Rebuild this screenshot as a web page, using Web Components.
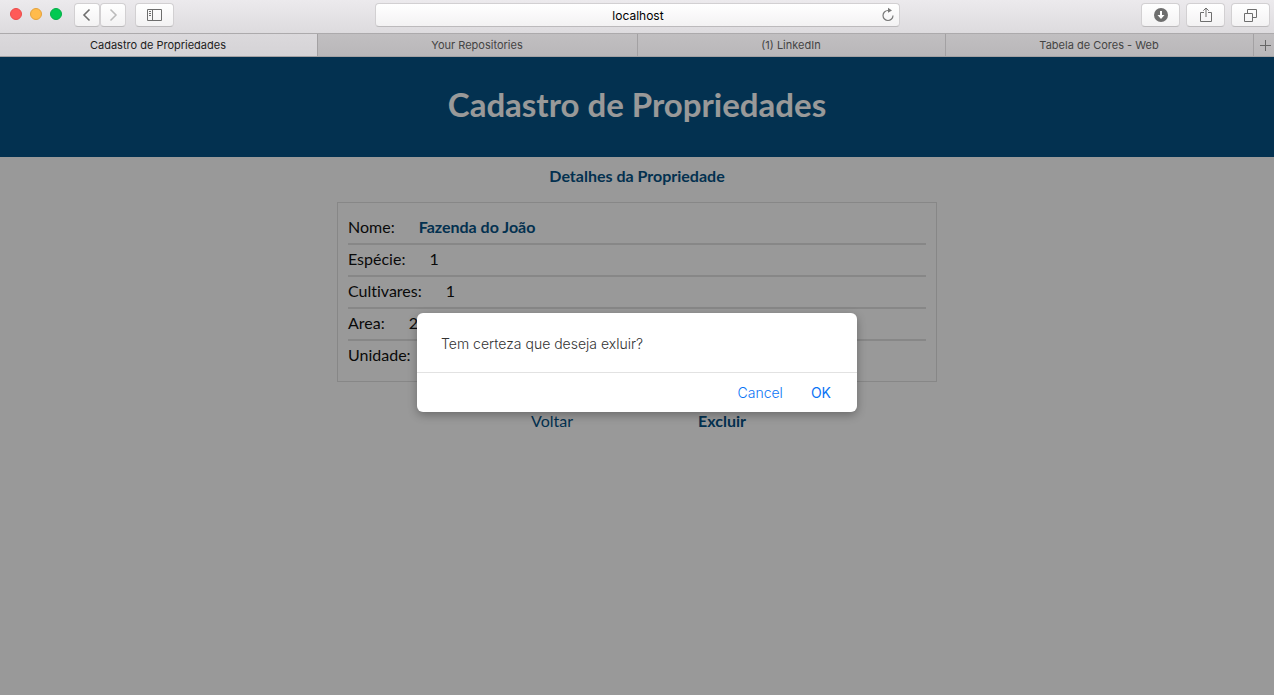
<!DOCTYPE html>
<html lang="pt-BR">
<head>
<meta charset="utf-8">
<meta name="viewport" content="width=device-width, initial-scale=1">
<title>Cadastro de Propriedades</title>
<style>
  body { margin: 0; font-family: Lato, "Open Sans", sans-serif; font-variant-ligatures: none; }
</style>
</head>
<body>
<browser-window></browser-window>

<script>
const define = (name, html) => {
  const template = document.createElement('template');
  template.innerHTML = html;
  customElements.define(name, class extends HTMLElement {
    constructor() {
      super();
      this.attachShadow({ mode: 'open' }).append(template.content.cloneNode(true));
    }
  });
};

define('tool-button', `
  <style>
    :host { display: block; flex: none; width: 39px; }
    :host([narrow]) { width: 26px; }
    button {
      display: flex; align-items: center; justify-content: center;
      box-sizing: border-box; width: 100%; height: 24px; padding: 0;
      border: 1px solid #d2d0d2; border-bottom-color: #bcbabc; border-radius: 4px;
      background: linear-gradient(#fff, #f3f2f3); color: #6e6e6e;
    }
  </style>
  <button type="button"><slot></slot></button>`);

define('browser-toolbar', `
  <style>
    :host {
      display: grid; grid-template-columns: 1fr minmax(200px, 525px) 1fr;
      box-sizing: border-box; height: 33px; padding: 3px 4px 0; column-gap: 8px;
      background: linear-gradient(#eceaed, #dddbde);
    }
    .left, .right { display: flex; }
    .lights { display: flex; gap: 8px; margin: 5px 12px 0 6px; }
    .lights i { box-sizing: border-box; width: 12px; height: 12px; border-radius: 50%; border-width: 1px; border-style: solid; }
    .red { background: #ff5a58; border-color: #ec4b49; }
    .yellow { background: #ffbb4b; border-color: #e5a23b; }
    .green { background: #00c951; border-color: #04ae47; }
    .nav { display: flex; margin-right: 9px; }
    .right { justify-content: flex-end; gap: 6px; }
    .address { position: relative; }
    input {
      display: block; box-sizing: border-box; width: 100%; height: 24px; padding: 0 20px 0 22px;
      border: 1px solid #d2d0d2; border-bottom-color: #bcbabc; border-radius: 4px;
      background: linear-gradient(#fff, #f3f2f3); text-align: center;
      font: 12px Inter, sans-serif; color: #000;
    }
    .reload {
      position: absolute; top: 4px; right: 4px; width: 16px; height: 16px;
      padding: 0; border: 0; background: none; color: #777;
    }
    svg { display: block; fill: none; stroke: currentColor; }
  </style>
  <div class="left">
    <div class="lights"><i class="red"></i><i class="yellow"></i><i class="green"></i></div>
    <div class="nav">
      <tool-button narrow><svg width="10" height="14" viewBox="0 0 10 14" stroke-width="1.6" aria-label="Back"><path d="M7.5 1.5 2 7l5.500 5.500"/></svg></tool-button>
      <tool-button narrow><svg width="10" height="14" viewBox="0 0 10 14" stroke-width="1.500" stroke-opacity=".45" aria-label="Forward"><path d="M2.500 1.500 8 7l-5.500 5.500"/></svg></tool-button>
    </div>
    <tool-button><svg width="15" height="12" viewBox="0 0 15 12" aria-label="Sidebar"><path d="M.5.5h14v11H.5zM5.500.5v11M2 2.500h2M2 4.500h2M2 6.500h2"/></svg></tool-button>
  </div>
  <div class="address">
    <input type="text" value="localhost" aria-label="Address">
    <button class="reload" type="button" aria-label="Reload"><svg width="16" height="16" viewBox="0 0 16 16" stroke-width="1.200"><path d="M8 3.500a5 5 0 1 0 5 5"/><path d="M8 .8v5l4-2.300z" fill="currentColor" stroke="none"/></svg></button>
  </div>
  <div class="right">
    <tool-button><svg width="14" height="14" viewBox="0 0 14 14" aria-label="Downloads"><circle cx="7" cy="7" r="7" fill="currentColor" stroke="none"/><path d="M7 3v5" stroke="#fff" stroke-width="2"/><path d="M3.500 7h7L7 11z" fill="#fff" stroke="none"/></svg></tool-button>
    <tool-button><svg width="12" height="16" viewBox="0 0 12 16" aria-label="Share"><path d="M4 5.500H.5v9h11v-9H8M6 10V1.200M3.300 3.700 6 1l2.700 2.700"/></svg></tool-button>
    <tool-button><svg width="13" height="13" viewBox="0 0 13 13" aria-label="Tabs"><path d="M.5 4.500h8v8h-8zM3.500 4.500v-4h9v8h-4"/></svg></tool-button>
  </div>`);

define('browser-tabs', `
  <style>
    :host {
      display: grid; grid-template-columns: 318fr 320fr 308fr 308fr 20px;
      box-sizing: border-box; height: 24px;
      border-top: 1px solid #acaaac; border-bottom: 1px solid #a3a1a3;
      background: linear-gradient(#c1bfc1, #b9b7b9);
    }
    button {
      min-width: 0; padding: 0 1px 0 0; border: 0; border-right: 1px solid #a3a1a3;
      background: none; font: 11px Inter, sans-serif; color: #444;
      white-space: nowrap; overflow: hidden;
    }
    .active { background: linear-gradient(#dbd9dc, #d5d3d6); color: #222; }
    .add { padding: 0 0 0 3px; border-right: 0; }
    svg { display: block; margin: auto; fill: none; stroke: #666; }
  </style>
  <button class="active" type="button">Cadastro de Propriedades</button>
  <button type="button">Your Repositories</button>
  <button type="button">(1) LinkedIn</button>
  <button type="button">Tabela de Cores - Web</button>
  <button class="add" type="button" aria-label="New tab"><svg width="11" height="11" viewBox="0 0 11 11"><path d="M5.500 0v11M0 5.500h11"/></svg></button>`);

define('detail-row', `
  <style>
    :host { display: flex; gap: 24px; padding-bottom: 2px; line-height: 28px; font-size: 16px; color: #111; border-bottom: 2px solid #e2e2e2; }
    :host(:last-child) { border-bottom: 0; }
  </style>
  <slot name="label"></slot><slot></slot>`);

define('property-page', `
  <style>
    :host { display: block; background: #fff; color: #055285; }
    header { display: flex; justify-content: center; background: #055285; color: #fff; }
    h1 { margin: 0; padding: 23px 0 29px; font-size: 33px; line-height: 48px; font-weight: 700; }
    h2 { margin: 9px 0 16px; text-align: center; font-size: 16px; line-height: 20px; font-weight: 700; }
    .card { box-sizing: border-box; max-width: 600px; margin: 0 auto; padding: 10px; border: 1px solid #e2e2e2; }
    b { color: #055285; }
    nav { display: flex; justify-content: center; margin-top: 29px; }
    nav a { width: 170px; text-align: center; font-size: 16px; line-height: 20px; color: #055285; text-decoration: none; }
    .danger { font-weight: 700; }
  </style>
  <header><h1>Cadastro de Propriedades</h1></header>
  <main>
    <h2>Detalhes da Propriedade</h2>
    <section class="card">
      <detail-row><span slot="label">Nome:</span><b>Fazenda do João</b></detail-row>
      <detail-row><span slot="label">Espécie:</span><span>1</span></detail-row>
      <detail-row><span slot="label">Cultivares:</span><span>1</span></detail-row>
      <detail-row><span slot="label">Area:</span><span>2</span></detail-row>
      <detail-row><span slot="label">Unidade:</span></detail-row>
    </section>
    <nav><a href="#voltar">Voltar</a><a class="danger" href="#excluir">Excluir</a></nav>
  </main>`);

define('confirm-dialog', `
  <style>
    :host {
      position: absolute; inset: 0; display: flex; align-items: flex-start; justify-content: center;
      padding-top: 256px; background: rgba(0, 0, 0, .4);
    }
    section {
      width: 440px; border-radius: 6px; background: #fff; color: #333;
      box-shadow: 0 3px 10px rgba(0, 0, 0, .3); font: 300 14px Inter, sans-serif;
    }
    p { margin: 0; padding: 21px 24px 18px; line-height: 20px; border-bottom: 1px solid #e2e2e2; }
    footer { display: flex; justify-content: flex-end; gap: 28px; padding: 10px 26px 9px; }
    button { padding: 0; border: 0; background: none; font: inherit; line-height: 20px; color: #0a74f5; }
    .ok { font-weight: 400; }
  </style>
  <section role="dialog" aria-modal="true" aria-labelledby="message">
    <p id="message"><slot></slot></p>
    <footer><button type="button">Cancel</button><button class="ok" type="button">OK</button></footer>
  </section>`);

define('browser-window', `
  <style>
    :host { display: flex; flex-direction: column; min-height: 100vh; }
    .view { position: relative; display: flex; flex: 1; }
    property-page { flex: 1; }
  </style>
  <browser-toolbar></browser-toolbar>
  <browser-tabs></browser-tabs>
  <div class="view">
    <property-page></property-page>
    <confirm-dialog>Tem certeza que deseja exluir?</confirm-dialog>
  </div>`);
</script>
</body>
</html>
